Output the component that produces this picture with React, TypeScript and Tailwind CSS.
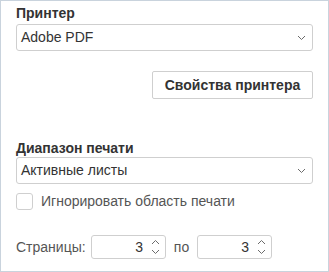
import React, { useState } from 'react';

const Chevron: React.FC<{ up?: boolean; className?: string }> = ({ up, className }) => (
  <svg width="9" height="6" viewBox="0 0 9 6" className={className}>
    <path
      d={up ? 'M1 5 L4.5 1.5 L8 5' : 'M1 1 L4.5 4.5 L8 1'}
      fill="none"
      stroke="#6b6b6b"
      strokeWidth="1"
    />
  </svg>
);

const Select: React.FC<{ value: string }> = ({ value }) => (
  <div className="h-[27px] flex items-center justify-between border border-[#cfcfcf] rounded-[3px] bg-white pl-[4px] pr-[6px] text-[14px] text-[#333]">
    <span>{value}</span>
    <Chevron />
  </div>
);

const Spin: React.FC<{ value: number }> = ({ value }) => (
  <div className="w-[75px] h-[24px] flex items-center justify-end border border-[#cfcfcf] rounded-[3px] bg-white pr-[5px] text-[14px] text-[#333]">
    <span className="mr-[8px]">{value}</span>
    <div className="flex flex-col gap-[4px]">
      <Chevron up />
      <Chevron />
    </div>
  </div>
);

export default function App() {
  const [ignore, setIgnore] = useState(false);
  return (
    <div
      className="w-[329px] h-[272px] border border-[#c9d3dd] bg-white px-[15px] pt-[3px] flex flex-col"
      style={{ fontFamily: '"Liberation Sans", Arial, sans-serif' }}
    >
      <div className="text-[14px] font-bold text-[#333] leading-[18px] mb-[2px]">Принтер</div>
      <Select value="Adobe PDF" />
      <button className="self-end mt-[20px] w-[161px] h-[28px] border border-[#cfcfcf] rounded-[2px] bg-white text-[14px] font-bold text-[#333]">
        Свойства принтера
      </button>
      <div className="text-[14px] font-bold text-[#333] leading-[18px] mt-[40px] mb-[0px]">Диапазон печати</div>
      <Select value="Активные листы" />
      <label className="flex items-center mt-[9px] gap-[8px] text-[14px] text-[#555] leading-[17px]">
        <span
          onClick={() => setIgnore(!ignore)}
          className="w-[17px] h-[17px] border border-[#cfcfcf] rounded-[3px] bg-white"
        />
        Игнорировать область печати
      </label>
      <div className="flex items-center mt-[25px] text-[14px] text-[#555]">
        <span className="w-[75px]">Страницы:</span>
        <Spin value={3} />
        <span className="w-[31px] text-center">по</span>
        <Spin value={3} />
      </div>
    </div>
  );
}
